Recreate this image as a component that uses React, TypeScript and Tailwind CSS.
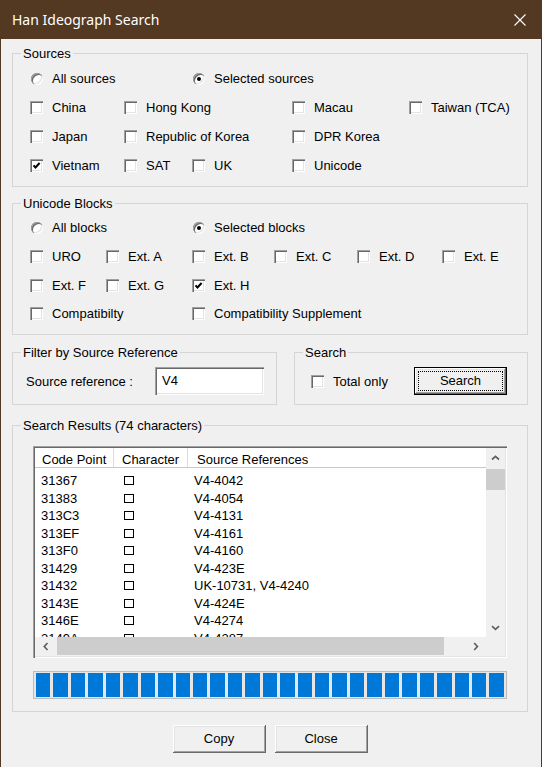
import React from 'react';

// classic win32 bevels
const sunken =
  'shadow-[inset_1px_1px_#a0a0a0,inset_2px_2px_#696969,inset_-1px_-1px_#ffffff,inset_-2px_-2px_#e3e3e3]';
const raised =
  'shadow-[inset_-1px_-1px_#696969,inset_1px_1px_#ffffff,inset_-2px_-2px_#a0a0a0,inset_2px_2px_#e3e3e3]';

const CheckBox = ({ checked }: { checked?: boolean }) => (
  <span className={`flex h-[13px] w-[13px] shrink-0 bg-white ${sunken}`}>
    {checked && (
      <svg width="13" height="13" viewBox="0 0 13 13">
        <path d="M3.5 6.3 L5.5 8.5 L9.6 4" fill="none" stroke="#000" strokeWidth="2" />
      </svg>
    )}
  </span>
);

const Radio = ({ checked }: { checked?: boolean }) => (
  <span
    className={`ml-[1px] flex h-[12px] w-[12px] shrink-0 items-center justify-center rounded-full bg-white ${sunken}`}
  >
    {checked && <span className="h-[4px] w-[4px] rounded-full bg-black" />}
  </span>
);

type OptProps = { label: string; checked?: boolean; radio?: boolean; className?: string };

const Opt = ({ label, checked, radio, className = '' }: OptProps) => (
  <div className={`flex shrink-0 items-center ${className}`}>
    {radio ? <Radio checked={checked} /> : <CheckBox checked={checked} />}
    <span className="ml-[9px] whitespace-nowrap">{label}</span>
  </div>
);

const Group = ({
  title,
  className = '',
  children,
}: {
  title: string;
  className?: string;
  children: React.ReactNode;
}) => (
  <fieldset className={`min-w-0 border border-[#d5d5d5] ${className}`}>
    <legend className="ml-[8px] px-[2px] leading-[15px]">{title}</legend>
    {children}
  </fieldset>
);

const Chevron = ({ dir }: { dir: 'up' | 'down' | 'left' | 'right' }) => {
  const d = {
    up: 'M1 4.5 L4.5 1.3 L8 4.5',
    down: 'M1 1.2 L4.5 4.4 L8 1.2',
    left: 'M4.5 1 L1.3 4.5 L4.5 8',
    right: 'M1.2 1 L4.4 4.5 L1.2 8',
  }[dir];
  const horiz = dir === 'up' || dir === 'down';
  return (
    <svg width={horiz ? 9 : 6} height={horiz ? 6 : 9} viewBox={horiz ? '0 0 9 6' : '0 0 6 9'}>
      <path d={d} fill="none" stroke="#606060" strokeWidth="1.7" />
    </svg>
  );
};

const rows: [string, string][] = [
  ['31367', 'V4-4042'],
  ['31383', 'V4-4054'],
  ['313C3', 'V4-4131'],
  ['313EF', 'V4-4161'],
  ['313F0', 'V4-4160'],
  ['31429', 'V4-423E'],
  ['31432', 'UK-10731, V4-4240'],
  ['3143E', 'V4-424E'],
  ['3146E', 'V4-4274'],
  ['3149A', 'V4-4287'],
];

const ListView = () => (
  <div className={`flex h-[212px] w-[474px] flex-col bg-[#f0f0f0] p-[2px] ${sunken}`}>
    <div className="flex h-[189px]">
      <div className="flex w-[451px] flex-col overflow-hidden bg-white">
        <div className="flex h-[20px] shrink-0 border-b border-[#c8c8c8]">
          <div className="flex w-[79px] items-center border-r border-[#dcdcdc] pl-[7px] pt-[3px]">Code Point</div>
          <div className="flex w-[74px] items-center border-r border-[#dcdcdc] pl-[8px] pt-[3px]">Character</div>
          <div className="flex items-center pl-[9px] pt-[3px]">Source References</div>
        </div>
        <div className="pt-[4px]">
          {rows.map(([cp, refs]) => (
            <div key={cp} className="flex h-[17.5px] items-center">
              <span className="w-[79px] pl-[6px]">{cp}</span>
              <span className="flex w-[74px] pl-[10px]">
                <span className="h-[9px] w-[10px] border border-black" />
              </span>
              <span className="pl-[6px]">{refs}</span>
            </div>
          ))}
        </div>
      </div>
      <div className="flex w-[19px] flex-col bg-[#f0f0f0]">
        <div className="flex h-[20px] items-center justify-center">
          <Chevron dir="up" />
        </div>
        <div className="mt-[1px] h-[21px] bg-[#cdcdcd]" />
        <div className="flex-1" />
        <div className="flex h-[19px] items-center justify-center">
          <Chevron dir="down" />
        </div>
      </div>
    </div>
    <div className="flex h-[19px]">
      <div className="flex w-[451px] bg-[#f0f0f0]">
        <div className="flex w-[22px] items-center justify-center">
          <Chevron dir="left" />
        </div>
        <div className="h-[18px] w-[387px] bg-[#cdcdcd]" />
        <div className="flex-1" />
        <div className="flex w-[20px] items-center justify-center">
          <Chevron dir="right" />
        </div>
      </div>
      <div className="w-[19px] bg-[#f0f0f0]" />
    </div>
  </div>
);

export default function App() {
  return (
    <div className="flex h-[767px] w-[542px] flex-col font-['Liberation_Sans',Arial,sans-serif] text-[13px] leading-[15px] text-black">
      <div className="flex h-[39px] shrink-0 items-center justify-between bg-[#533822] pl-[12px] pr-[16px]">
        <span className="font-['Segoe_UI','Noto_Sans',sans-serif] text-[14px] text-white">Han Ideograph Search</span>
        <svg width="12" height="12" viewBox="0 0 12 12">
          <path d="M0.5 0.5 L11.5 11.5 M11.5 0.5 L0.5 11.5" stroke="#fff" strokeWidth="1.1" />
        </svg>
      </div>

      <div className="flex flex-1 flex-col border-x border-[#533822] bg-[#f0f0f0] pl-[11px] pr-[13px]">
        <Group title="Sources" className="mt-[7px] h-[141px]">
          <div className="flex flex-col pl-[17px] pt-[3px]">
            <div className="flex h-[29px] items-center">
              <Opt radio label="All sources" className="w-[162px]" />
              <Opt radio checked label="Selected sources" />
            </div>
            <div className="flex h-[29px] items-center">
              <Opt label="China" className="w-[94px]" />
              <Opt label="Hong Kong" className="w-[168px]" />
              <Opt label="Macau" className="w-[117px]" />
              <Opt label="Taiwan (TCA)" />
            </div>
            <div className="flex h-[29px] items-center">
              <Opt label="Japan" className="w-[94px]" />
              <Opt label="Republic of Korea" className="w-[168px]" />
              <Opt label="DPR Korea" />
            </div>
            <div className="flex h-[29px] items-center">
              <Opt checked label="Vietnam" className="w-[94px]" />
              <Opt label="SAT" className="w-[68px]" />
              <Opt label="UK" className="w-[100px]" />
              <Opt label="Unicode" />
            </div>
          </div>
        </Group>

        <Group title="Unicode Blocks" className="mt-[9px] h-[139px]">
          <div className="flex flex-col pl-[17px] pt-[2px]">
            <div className="flex h-[29px] items-center">
              <Opt radio label="All blocks" className="w-[162px]" />
              <Opt radio checked label="Selected blocks" />
            </div>
            <div className="flex h-[29px] items-center">
              <Opt label="URO" className="w-[76px]" />
              <Opt label="Ext. A" className="w-[86px]" />
              <Opt label="Ext. B" className="w-[82px]" />
              <Opt label="Ext. C" className="w-[83px]" />
              <Opt label="Ext. D" className="w-[85px]" />
              <Opt label="Ext. E" />
            </div>
            <div className="flex h-[29px] items-center">
              <Opt label="Ext. F" className="w-[76px]" />
              <Opt label="Ext. G" className="w-[86px]" />
              <Opt checked label="Ext. H" />
            </div>
            <div className="flex h-[27px] items-center">
              <Opt label="Compatibilty" className="w-[162px]" />
              <Opt label="Compatibility Supplement" />
            </div>
          </div>
        </Group>

        <div className="mt-[10px] flex gap-[17px]">
          <Group title="Filter by Source Reference" className="h-[60px] w-[265px]">
            <div className="flex items-center pl-[13px] pt-[7px]">
              <span className="w-[129px] whitespace-nowrap">Source reference :</span>
              <div className={`flex h-[28px] w-[109px] items-center bg-white pb-[2px] pl-[7px] ${sunken}`}>V4</div>
            </div>
          </Group>
          <Group title="Search" className="h-[60px] w-[234px]">
            <div className="flex items-center pl-[16px] pt-[7px]">
              <Opt label="Total only" className="w-[103px]" />
              <button
                className={`flex h-[28px] w-[93px] items-center justify-center border border-black bg-[#f0f0f0] ${raised}`}
              >
                <span className="flex h-[20px] w-[85px] items-center justify-center border border-dotted border-black pb-[1px]">
                  Search
                </span>
              </button>
            </div>
          </Group>
        </div>

        <Group title="Search Results (74 characters)" className="mt-[13px] h-[294px]">
          <div className="flex flex-col pl-[20px] pt-[13px]">
            <ListView />
            <div className="mt-[13px] flex h-[28px] w-[474px] gap-[3px] border border-[#bcbcbc] bg-[#e6e6e6] px-[2px] py-[1px]">
              {Array.from({ length: 27 }).map((_, i) => (
                <span key={i} className="flex-1 bg-[#0078d7]" />
              ))}
            </div>
          </div>
        </Group>

        <div className="mt-[13px] flex justify-center gap-[9px]">
          <button className={`h-[28px] w-[93px] bg-[#f0f0f0] pb-[1px] ${raised}`}>Copy</button>
          <button className={`h-[28px] w-[93px] bg-[#f0f0f0] pb-[1px] ${raised}`}>Close</button>
        </div>
      </div>
    </div>
  );
}
